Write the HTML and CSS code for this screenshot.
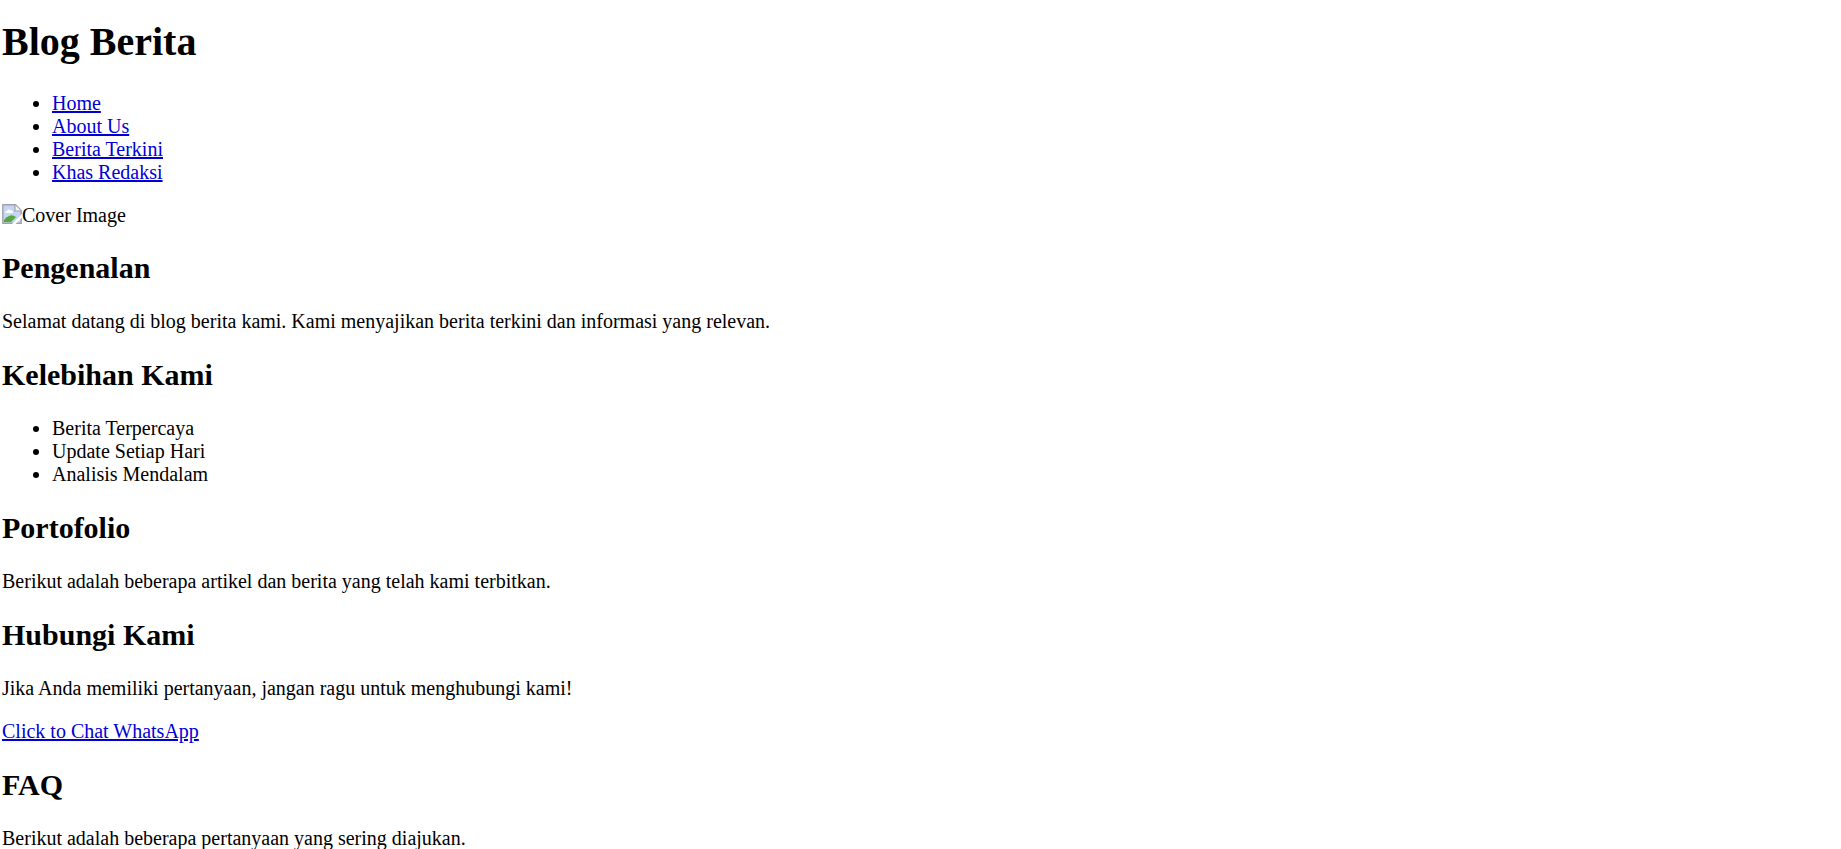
FILE: index.html
```
<!DOCTYPE html>
<html lang="id">
<head>
<meta charset="utf-8">
<title>Blog Berita</title>
<link rel="stylesheet" href="styles.css">
</head>
<body class="page">
<header>
<h1 class="title">Blog Berita</h1>
<nav>
<ul class="list">
<li><a class="link" href="#home">Home</a></li>
<li><a class="link" href="#about">About Us</a></li>
<li><a class="link" href="#berita">Berita Terkini</a></li>
<li><a class="link" href="#khas">Khas Redaksi</a></li>
</ul>
</nav>
</header>
<main>
<div class="cover">
<svg class="cover-icon" viewBox="0 0 20 20" aria-hidden="true">
<path d="M1 1H14L19 6V19H1Z" fill="#c5d5f3"/>
<path d="M3 9Q3 7 5 7Q6 4 8 6Q11 6 11 9Z" fill="#fff"/>
<path d="M2 18V16Q4 13 7 12Q10 10 14 13L9 18Z" fill="#54a93c"/>
<path d="M.8 19.2V.8H13.5L19.2 6.5V19.2Z" fill="none" stroke="#a0a3aa" stroke-width="1.4"/>
<path d="M13 1V7H19" fill="#f4f5f8" stroke="#a0a3aa" stroke-width="1.2"/>
<path d="M10 20L20 10V13.5L13.5 20Z" fill="#fff"/>
</svg>
<span>Cover Image</span>
</div>
<section id="home">
<h2 class="heading">Pengenalan</h2>
<p class="text">Selamat datang di blog berita kami. Kami menyajikan berita terkini dan informasi yang relevan.</p>
</section>
<section>
<h2 class="heading">Kelebihan Kami</h2>
<ul class="list">
<li>Berita Terpercaya</li>
<li>Update Setiap Hari</li>
<li>Analisis Mendalam</li>
</ul>
</section>
<section>
<h2 class="heading">Portofolio</h2>
<p class="text">Berikut adalah beberapa artikel dan berita yang telah kami terbitkan.</p>
</section>
<section>
<h2 class="heading">Hubungi Kami</h2>
<p class="text">Jika Anda memiliki pertanyaan, jangan ragu untuk menghubungi kami!</p>
<a class="link" href="#whatsapp">Click to Chat WhatsApp</a>
</section>
<section>
<h2 class="heading">FAQ</h2>
<p class="text">Berikut adalah beberapa pertanyaan yang sering diajukan.</p>
</section>
</main>
</body>
</html>
```
FILE: styles.css
```
.page {
  margin: 0 2px;
  background: #fff;
  color: #000;
  font-family: "Liberation Serif", "Times New Roman", serif;
  font-size: 20px;
  line-height: 23px;
}

.title {
  margin: 0 0 27px;
  padding-top: 19px;
  font-size: 40px;
  line-height: 46px;
}

.list {
  margin: 20px 0;
  padding-left: 50px;
}

.link {
  color: #0000d6;
  text-decoration-thickness: 2px;
}

.cover {
  display: flex;
  line-height: 22px;
}

.cover-icon {
  width: 20px;
  height: 20px;
}

.heading {
  margin: 25px 0;
  font-size: 30px;
  line-height: 34px;
}

.text {
  margin: 20px 0;
}
```
